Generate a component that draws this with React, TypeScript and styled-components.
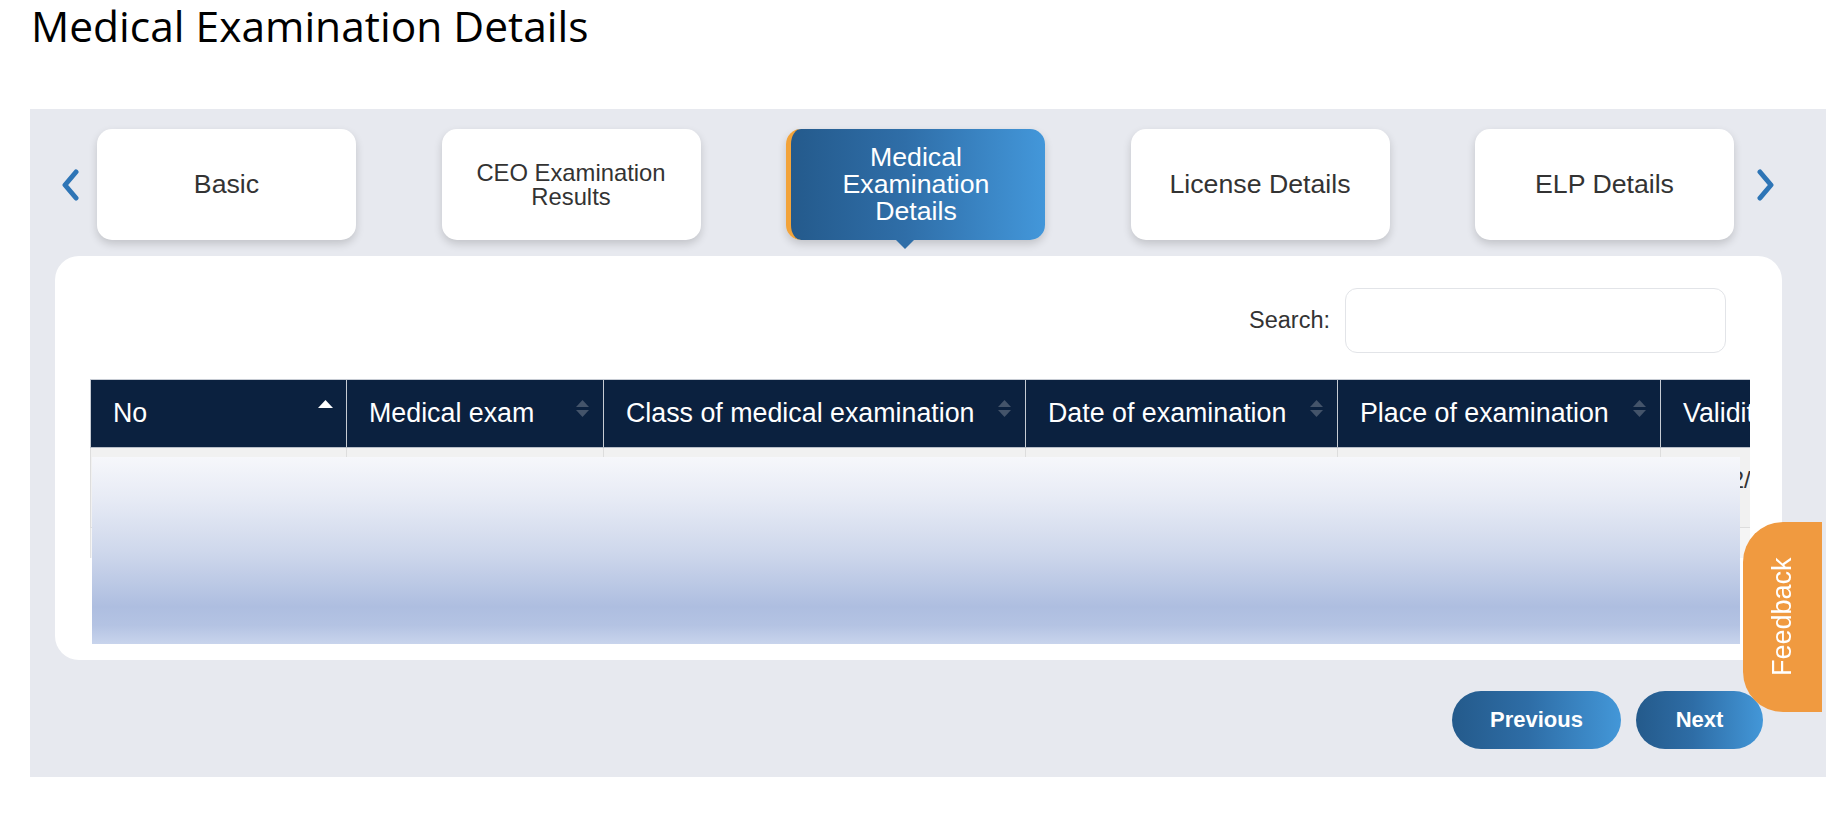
import React from 'react';
import styled, { createGlobalStyle, css } from 'styled-components';

const GlobalStyle = createGlobalStyle`
  html, body {
    margin: 0;
    padding: 0;
    background: #ffffff;
    overflow: hidden;
  }
  body {
    font-family: "Liberation Sans", Arial, sans-serif;
    color: #333333;
  }
  * { box-sizing: border-box; }
`;

const Page = styled.div`
  width: 1826px;
  height: 838px;
`;

const Title = styled.h1`
  margin: 0;
  padding: 5px 0 0 31px;
  font-family: "Open Sans", sans-serif;
  font-weight: 400;
  font-size: 42.5px;
  line-height: 42px;
  letter-spacing: 0;
  color: #000000;
`;

const Panel = styled.section`
  margin: 62px 0 0 30px;
  height: 668px;
  background: #e7e9ef;
  padding-top: 20px;
`;

const TabsRow = styled.div`
  display: flex;
  align-items: center;
  height: 111px;
  padding-left: 31px;
`;

const ChevronButton = styled.button<{ $side: 'left' | 'right' }>`
  display: flex;
  align-items: center;
  justify-content: center;
  width: 20px;
  height: 32px;
  padding: 0;
  border: none;
  background: transparent;
  cursor: pointer;
  margin-left: ${(p) => (p.$side === 'left' ? '0' : '21px')};
  margin-right: ${(p) => (p.$side === 'left' ? '16px' : '0')};
`;

const Tabs = styled.div`
  display: flex;
  gap: 85.5px;
`;

const Tab = styled.div<{ $active?: boolean; $compact?: boolean }>`
  position: relative;
  width: 259px;
  height: 111px;
  border-radius: 15px;
  background: #ffffff;
  box-shadow: 0 4px 8px rgba(0, 0, 0, 0.16);
  display: flex;
  align-items: center;
  justify-content: center;
  text-align: center;
  padding: 0 28px;
  font-size: ${(p) => (p.$compact ? '23.8px' : '26.7px')};
  line-height: ${(p) => (p.$compact ? '24px' : '27px')};
  color: #333333;
  ${(p) =>
    p.$active &&
    css`
      background: linear-gradient(to right, #245a8c 0%, #2f6ea8 45%, #4397da 100%);
      color: #ffffff;
      border-left: 5px solid #f2a33a;
      padding: 0 30px 0 26px;
      &::after {
        content: '';
        position: absolute;
        left: 45%;
        bottom: -9px;
        margin-left: -9px;
        border-left: 9px solid transparent;
        border-right: 9px solid transparent;
        border-top: 9px solid #2f6ea8;
      }
    `}
`;

const Card = styled.div`
  margin: 16px 44px 0 25px;
  height: 404px;
  background: #ffffff;
  border-radius: 24px;
  padding: 32px 32px 17px 35px;
`;

const SearchRow = styled.div`
  display: flex;
  justify-content: flex-end;
  align-items: center;
  gap: 15px;
  padding-right: 24px;
`;

const SearchLabel = styled.label`
  font-size: 23.5px;
  color: #333333;
`;

const SearchInput = styled.input`
  width: 381px;
  height: 65px;
  border: 1px solid #e2e4e8;
  border-radius: 12px;
  background: #ffffff;
  outline: none;
  font-size: 22px;
  padding: 0 14px;
`;

const TableArea = styled.div`
  position: relative;
  margin-top: 26px;
  height: 265px;
`;

const TableScroll = styled.div`
  width: 100%;
  overflow: hidden;
`;

const DataTable = styled.table`
  border-collapse: collapse;
  table-layout: fixed;
  width: 2000px;
`;

const HeadCell = styled.th<{ $w: number }>`
  width: ${(p) => p.$w}px;
  height: 68px;
  padding: 0 13px 0 22px;
  background: #0b213f;
  color: #ffffff;
  font-size: 26.8px;
  font-weight: 400;
  text-align: left;
  border: 1px solid #c6cbd3;
  border-bottom-color: #b8bec8;
  white-space: nowrap;
`;

const HeadInner = styled.div`
  display: flex;
  justify-content: space-between;
  align-items: center;
  height: 100%;
`;

const SortIcon = styled.svg`
  flex: none;
  align-self: flex-start;
  margin-top: 20px;
`;

const BodyCell = styled.td`
  height: 80px;
  padding: 18px 23px 0;
  vertical-align: top;
  background: #f1f1f1;
  border: 1px solid #dddddd;
  border-top: none;
  font-size: 24px;
  line-height: 28px;
  color: #333333;
  white-space: nowrap;
  overflow: hidden;
`;

const ScrollTrack = styled.div`
  height: 30px;
  width: 100%;
  background: #f5f5f5;
  border-left: 1px solid #e3e3e3;
`;

const Processing = styled.div`
  position: absolute;
  top: 78px;
  left: 2px;
  right: 10px;
  bottom: 0;
  background: linear-gradient(
    to bottom,
    #f6f7fb 0%,
    #e7ebf5 22%,
    #cfd8ec 50%,
    #aebee0 80%,
    #b4c3e3 90%,
    #c8d4ec 100%
  );
`;

const ButtonRow = styled.div`
  display: flex;
  justify-content: flex-end;
  gap: 15px;
  margin-top: 31px;
  padding-right: 63px;
`;

const NavButton = styled.button<{ $w: number }>`
  width: ${(p) => p.$w}px;
  height: 58px;
  border: none;
  border-radius: 29px;
  background: linear-gradient(to right, #245a8b 0%, #2e6da6 45%, #4397d8 100%);
  color: #ffffff;
  font-family: "Liberation Sans", Arial, sans-serif;
  font-weight: 700;
  font-size: 22px;
  cursor: pointer;
`;

const Feedback = styled.div`
  position: fixed;
  right: 4px;
  top: 522px;
  width: 79px;
  height: 190px;
  background: #f09a40;
  display: flex;
  align-items: center;
  justify-content: center;
  color: #ffffff;
  font-size: 27px;
  writing-mode: vertical-rl;
  transform: rotate(180deg);
  border-radius: 0 40px 40px 0;
`;

const Chevron = ({ dir }: { dir: 'left' | 'right' }) => (
  <svg width="20" height="32" viewBox="0 0 20 32" aria-hidden="true">
    <polyline
      points={dir === 'left' ? '15,3 4,16 15,29' : '5,3 16,16 5,29'}
      fill="none"
      stroke="#2e75b6"
      strokeWidth="5"
      strokeLinecap="round"
      strokeLinejoin="round"
    />
  </svg>
);

const Sort = ({ active }: { active?: boolean }) => (
  <SortIcon width="15" height="18" viewBox="0 0 15 18" aria-hidden="true">
    {active ? (
      <polygon points="0,8 7.5,0 15,8" fill="#ffffff" />
    ) : (
      <>
        <polygon points="1,7 7.5,0 14,7" fill="#44546a" />
        <polygon points="1,10 14,10 7.5,17" fill="#44546a" />
      </>
    )}
  </SortIcon>
);

const columns = [
  { label: 'No', w: 256, active: true },
  { label: 'Medical exam', w: 257 },
  { label: 'Class of medical examination', w: 422 },
  { label: 'Date of examination', w: 312 },
  { label: 'Place of examination', w: 323 },
  { label: 'Validity of medical certificate', w: 430 },
];

const row = ['1', 'Medical', 'Class 1', '10/12/2025', 'Tokyo', '15/12/2026'];

const tabs = [
  { label: 'Basic' },
  { label: 'CEO Examination Results', compact: true },
  { label: 'Medical Examination Details', active: true },
  { label: 'License Details' },
  { label: 'ELP Details' },
];

export default function App() {
  return (
    <Page>
      <GlobalStyle />
      <Title>Medical Examination Details</Title>
      <Panel>
        <TabsRow>
          <ChevronButton $side="left" aria-label="Previous tabs">
            <Chevron dir="left" />
          </ChevronButton>
          <Tabs>
            {tabs.map((t) => (
              <Tab key={t.label} $active={t.active} $compact={t.compact}>
                {t.label}
              </Tab>
            ))}
          </Tabs>
          <ChevronButton $side="right" aria-label="Next tabs">
            <Chevron dir="right" />
          </ChevronButton>
        </TabsRow>
        <Card>
          <SearchRow>
            <SearchLabel htmlFor="search">Search:</SearchLabel>
            <SearchInput id="search" type="search" />
          </SearchRow>
          <TableArea>
            <TableScroll>
              <DataTable>
                <thead>
                  <tr>
                    {columns.map((c) => (
                      <HeadCell key={c.label} $w={c.w}>
                        <HeadInner>
                          <span>{c.label}</span>
                          <Sort active={c.active} />
                        </HeadInner>
                      </HeadCell>
                    ))}
                  </tr>
                </thead>
                <tbody>
                  <tr>
                    {row.map((v, i) => (
                      <BodyCell key={i}>{v}</BodyCell>
                    ))}
                  </tr>
                </tbody>
              </DataTable>
              <ScrollTrack />
            </TableScroll>
            <Processing />
          </TableArea>
        </Card>
        <ButtonRow>
          <NavButton $w={169}>Previous</NavButton>
          <NavButton $w={127}>Next</NavButton>
        </ButtonRow>
      </Panel>
      <Feedback>Feedback</Feedback>
    </Page>
  );
}
